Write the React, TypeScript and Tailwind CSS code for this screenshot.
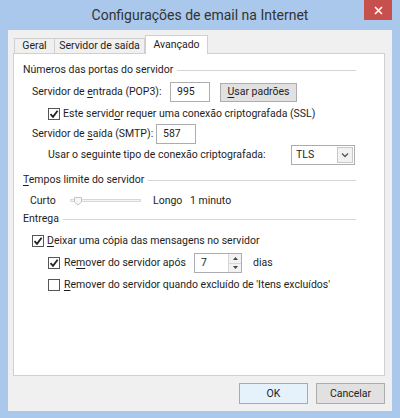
import React from 'react';

const font = { fontFamily: 'Roboto, "Noto Sans", sans-serif' };

const Check = ({ checked }: { checked?: boolean }) => (
  <span className="flex h-[12px] w-[12px] shrink-0 items-center justify-center border border-[#555] bg-white">
    {checked && (
      <svg width="10" height="10" viewBox="0 0 10 10">
        <path d="M1.5 5.2 L4 7.8 L8.6 1.8" fill="none" stroke="#222" strokeWidth="1.8" />
      </svg>
    )}
  </span>
);

const U = ({ children }: { children: React.ReactNode }) => <span className="underline underline-offset-2">{children}</span>;

const GroupHeader = ({ children }: { children: React.ReactNode }) => (
  <div className="flex h-[18px] items-center">
    <span className="whitespace-nowrap pr-[4px]">{children}</span>
    <span className="h-px flex-1 bg-[#d5d5d5]" />
  </div>
);

const Input = ({ value, width }: { value: string; width: string }) => (
  <div className={`flex h-[20px] shrink-0 ${width} items-center border border-[#abadb3] bg-white pl-[6px]`}>{value}</div>
);

export default function App() {
  return (
    <div className="flex h-[418px] w-[400px] flex-col overflow-hidden bg-[#aac8eb] text-[10.5px] text-[#1e1e1e]" style={font}>
      {/* title bar */}
      <div className="relative flex h-[30px] shrink-0 items-center justify-center">
        <span className="text-[14px] text-[#333]">Configurações de email na Internet</span>
        <div className="absolute right-[8px] top-0 flex h-[20px] w-[28px] items-center justify-center bg-[#c8504c]">
          <svg width="9" height="9" viewBox="0 0 9 9">
            <path d="M1 1 L8 8 M8 1 L1 8" stroke="#fff" strokeWidth="1.6" />
          </svg>
        </div>
      </div>

      {/* dialog body */}
      <div className="mx-[8px] flex h-[381px] shrink-0 flex-col whitespace-nowrap bg-[#f0f0f0] pl-[5px] pr-[7px]">
        {/* tabs */}
        <div className="mt-[6px] flex h-[17px] items-end pl-px">
          <div className="flex h-[15px] w-[41px] items-center justify-center border border-b-0 border-[#d0d0d0]">Geral</div>
          <div className="flex h-[15px] w-[90px] items-center justify-center border border-b-0 border-l-0 border-[#d0d0d0]">Servidor de saída</div>
          <div className="relative -mb-px flex h-[19px] w-[63px] items-center justify-center border border-b-0 border-[#d0d0d0] bg-white">Avançado</div>
        </div>

        {/* panel */}
        <div className="flex h-[323px] flex-col border border-[#d0d0d0] bg-white pl-[9px] pr-[28px] pt-[7px]">
          <GroupHeader>Números das portas do servidor</GroupHeader>

          <div className="mt-[3px] flex h-[20px] items-center pl-[9px]">
            <span className="w-[138px] shrink-0">Servidor de <U>e</U>ntrada (POP3):</span>
            <Input value="995" width="w-[40px]" />
            <div className="ml-[10px] flex h-[19px] w-[77px] shrink-0 items-center justify-center border border-[#adadad] bg-[#e1e1e1]">
              <U>U</U>sar padrões
            </div>
          </div>

          <div className="mt-[2px] flex h-[20px] items-center gap-[3px] pl-[25px]">
            <Check checked />
            <span>Este servid<U>o</U>r requer uma conexão criptografada (SSL)</span>
          </div>

          <div className="flex h-[20px] items-center pl-[9px]">
            <span className="w-[124px] shrink-0">Servidor de <U>s</U>aída (SMTP):</span>
            <Input value="587" width="w-[40px]" />
          </div>

          <div className="mt-[1px] flex h-[20px] items-center pl-[25px]">
            <span className="w-[243px] shrink-0">Usar o seguinte tipo de conexão criptografada:</span>
            <div className="flex h-[20px] w-[64px] shrink-0 items-center border border-[#acacac] bg-white">
              <span className="flex-1 pl-[4px]">TLS</span>
              <div className="mr-px flex h-[16px] w-[16px] items-center justify-center border border-[#c8c8c8] bg-[#f2f2f2]">
                <svg width="8" height="6" viewBox="0 0 8 6">
                  <path d="M1 1.5 L4 4.5 L7 1.5" fill="none" stroke="#555" strokeWidth="1.3" />
                </svg>
              </div>
            </div>
          </div>

          <div className="mt-[6px]">
            <GroupHeader>
              <U>T</U>empos limite do servidor
            </GroupHeader>
          </div>

          <div className="mt-[3px] flex h-[18px] items-center pl-[7px]">
            <span className="w-[40px] shrink-0">Curto</span>
            <svg width="72" height="14" viewBox="0 0 72 14" className="shrink-0">
              <rect x="0.5" y="5.5" width="70" height="2" fill="#f4f4f4" stroke="#d8d8d8" strokeWidth="1" />
              <path d="M4.5 3.5 H11.5 V8 L8 11 L4.5 8 Z" fill="#f7f7f7" stroke="#c4c4c4" strokeWidth="1" />
            </svg>
            <span className="ml-[11px] w-[37px] shrink-0">Longo</span>
            <span>1 minuto</span>
          </div>

          <GroupHeader>Entrega</GroupHeader>

          <div className="mt-[3px] flex h-[20px] items-center gap-[3px] pl-[9px]">
            <Check checked />
            <span>
              <U>D</U>eixar uma cópia das mensagens no servidor
            </span>
          </div>

          <div className="mt-[2px] flex h-[20px] items-center pl-[25px]">
            <Check checked />
            <span className="ml-[4px] w-[130px] shrink-0">
              Re<U>m</U>over do servidor após
            </span>
            <div className="flex h-[20px] w-[48px] shrink-0 items-center border border-[#abadb3] bg-white pl-[6px]">
              <span className="flex-1">7</span>
              <div className="flex h-full w-[13px] flex-col border-l border-[#d6d6d6] bg-[#f2f2f2]">
                <div className="flex flex-1 items-center justify-center border-b border-[#d6d6d6]">
                  <svg width="5" height="3" viewBox="0 0 5 3">
                    <path d="M0 3 L2.5 0 L5 3 Z" fill="#444" />
                  </svg>
                </div>
                <div className="flex flex-1 items-center justify-center">
                  <svg width="5" height="3" viewBox="0 0 5 3">
                    <path d="M0 0 L2.5 3 L5 0 Z" fill="#444" />
                  </svg>
                </div>
              </div>
            </div>
            <span className="ml-[11px]">dias</span>
          </div>

          <div className="mt-[2px] flex h-[20px] items-center pl-[25px]">
            <Check />
            <span className="ml-[4px]">
              <U>R</U>emover do servidor quando excluído de 'Itens excluídos'
            </span>
          </div>
        </div>

        {/* buttons */}
        <div className="mt-[7px] flex justify-end gap-[8px]">
          <div className="flex h-[21px] w-[69px] items-center justify-center border border-[#7eb4ea] bg-[#e5f1fb]">OK</div>
          <div className="flex h-[21px] w-[69px] items-center justify-center border border-[#adadad] bg-[#e1e1e1]">Cancelar</div>
        </div>
      </div>
    </div>
  );
}
